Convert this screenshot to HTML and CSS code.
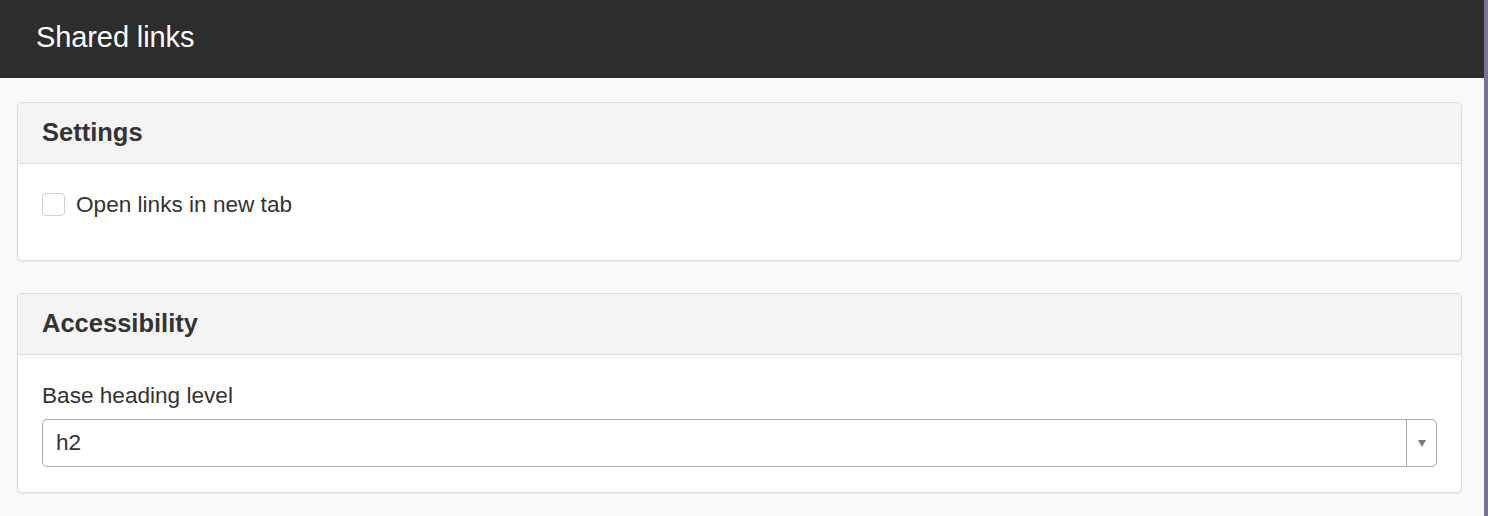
FILE: index.html
```html
<!DOCTYPE html>
<html>
<head>
<meta charset="utf-8">
<link rel="stylesheet" href="styles.css">
</head>
<body>
<div class="app">
  <div class="page">
    <header class="topbar"><h1 class="title">Shared links</h1></header>
    <main class="content">
      <section class="panel">
        <div class="panel-head"><h2 class="panel-title">Settings</h2></div>
        <div class="panel-body panel-body-settings">
          <label class="check-row"><span class="checkbox"></span><span class="check-label">Open links in new tab</span></label>
        </div>
      </section>
      <section class="panel">
        <div class="panel-head"><h2 class="panel-title">Accessibility</h2></div>
        <div class="panel-body panel-body-access">
          <div class="field-label">Base heading level</div>
          <div class="select">
            <span class="select-value">h2</span>
            <span class="select-arrow"><span class="tri"></span></span>
          </div>
        </div>
      </section>
    </main>
  </div>
  <div class="strip"></div>
</div>
</body>
</html>
```
FILE: styles.css
```css
html, body { margin: 0; padding: 0; height: 100%; }
body { font-family: "Liberation Sans", Arial, sans-serif; color: #333; background: #f9f9f9; }
.app { display: flex; height: 516px; overflow: hidden; }
.page { flex: 1; display: flex; flex-direction: column; background: #f9f9f9; }
.strip { width: 4px; background: #74758f; }
.topbar { height: 78px; background: #2d2d2d; display: flex; align-items: center; padding-left: 36px; box-sizing: border-box; }
.title { margin: 0; font-size: 29px; font-weight: normal; color: #fff; letter-spacing: -0.1px; padding-bottom: 3px; }
.content { padding: 24px 22px 0 17px; display: flex; flex-direction: column; gap: 32px; }
.panel { background: #fff; border: 1px solid #dcdcdc; border-radius: 5px; box-shadow: 0 1px 2px rgba(0,0,0,0.07); overflow: hidden; }
.panel-head { background: #f4f4f4; border-bottom: 1px solid #dedede; height: 60px; display: flex; align-items: center; padding-left: 24px; }
.panel-title { margin: 0; font-size: 25.5px; font-weight: bold; color: #333; padding-bottom: 1px; }
.panel-body { padding: 0 24px; }
.panel-body-settings { height: 96px; padding-top: 27px; box-sizing: border-box; }
.check-row { display: flex; align-items: center; gap: 11px; }
.checkbox { width: 23px; height: 23px; border: 1px solid #cfcfcf; border-radius: 4px; box-sizing: border-box; background: #fff; }
.check-label { font-size: 22.6px; line-height: 24px; padding-top: 2px; }
.panel-body-access { height: 137px; padding-top: 28px; box-sizing: border-box; }
.field-label { font-size: 22.6px; line-height: 26px; margin-bottom: 10px; }
.select { height: 48px; border: 1px solid #aaa; border-radius: 5px; display: flex; align-items: center; box-sizing: border-box; }
.select-value { flex: 1; padding-left: 13px; font-size: 22.6px; }
.select-arrow { width: 29px; height: 100%; border-left: 1px solid #aaa; display: flex; align-items: center; justify-content: center; }
.tri { width: 0; height: 0; border-left: 4.5px solid transparent; border-right: 4.5px solid transparent; border-top: 7px solid #7a7a7a; margin-left: 1px; }
```
